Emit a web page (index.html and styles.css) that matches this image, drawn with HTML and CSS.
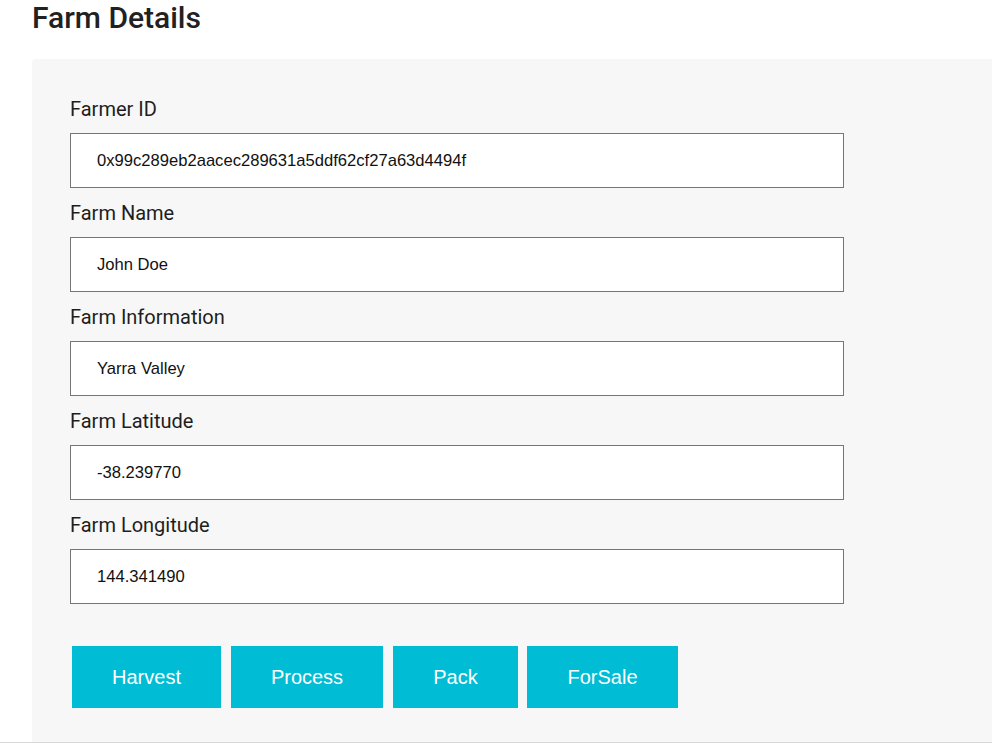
FILE: index.html
```html
<!DOCTYPE html>
<html>
<head>
<meta charset="utf-8">
<link rel="stylesheet" href="styles.css">
</head>
<body>
<div class="page">
  <h1 class="title">Farm Details</h1>
  <div class="panel">
    <div class="field">
      <label class="label">Farmer ID</label>
      <div class="input">0x99c289eb2aacec289631a5ddf62cf27a63d4494f</div>
    </div>
    <div class="field">
      <label class="label">Farm Name</label>
      <div class="input">John Doe</div>
    </div>
    <div class="field">
      <label class="label">Farm Information</label>
      <div class="input">Yarra Valley</div>
    </div>
    <div class="field">
      <label class="label">Farm Latitude</label>
      <div class="input">-38.239770</div>
    </div>
    <div class="field">
      <label class="label">Farm Longitude</label>
      <div class="input">144.341490</div>
    </div>
    <div class="actions">
      <button class="btn btn-harvest">Harvest</button>
      <button class="btn btn-process">Process</button>
      <button class="btn btn-pack">Pack</button>
      <button class="btn btn-sale">ForSale</button>
    </div>
  </div>
  <div class="strip"></div>
</div>
</body>
</html>
```

FILE: styles.css
```css
html, body {
  margin: 0;
  padding: 0;
  background: #ffffff;
  overflow: hidden;
}

.page {
  padding-left: 32px;
}

.title {
  margin: 0 0 24px 0;
  font-family: Roboto, "Noto Sans", sans-serif;
  font-weight: 500;
  font-size: 30px;
  line-height: 35px;
  color: #212121;
}

.panel {
  background: #f7f7f7;
  border-top-left-radius: 4px;
  padding: 39px 0 34px 38px;
}

.field {
  display: flex;
  flex-direction: column;
  margin-bottom: 14px;
}

.label {
  font-family: Roboto, "Noto Sans", sans-serif;
  font-size: 20px;
  line-height: 23px;
  color: #1e1e1e;
  margin-bottom: 12px;
}

.input {
  box-sizing: border-box;
  width: 774px;
  height: 55px;
  border: 1px solid #767676;
  background: #ffffff;
  padding-left: 26px;
  display: flex;
  align-items: center;
  font-family: "Liberation Sans", Arial, sans-serif;
  font-size: 16.6px;
  color: #111111;
}

.field:last-of-type {
  margin-bottom: 0;
}

.actions {
  display: flex;
  gap: 10px;
  margin-top: 42px;
  margin-left: 2px;
}

.btn {
  height: 62px;
  border: none;
  border-radius: 0;
  background: #00bcd4;
  color: #ffffff;
  font-family: "Liberation Sans", Arial, sans-serif;
  font-size: 20px;
  padding: 0;
  text-align: center;
}

.btn-harvest { width: 149px; }
.btn-process { width: 152px; }
.btn-pack { width: 125px; }
.btn-sale { width: 151px; margin-left: -1px; }

.strip {
  height: 3px;
  margin-left: -32px;
  background: #d8d8d8;
}
```
